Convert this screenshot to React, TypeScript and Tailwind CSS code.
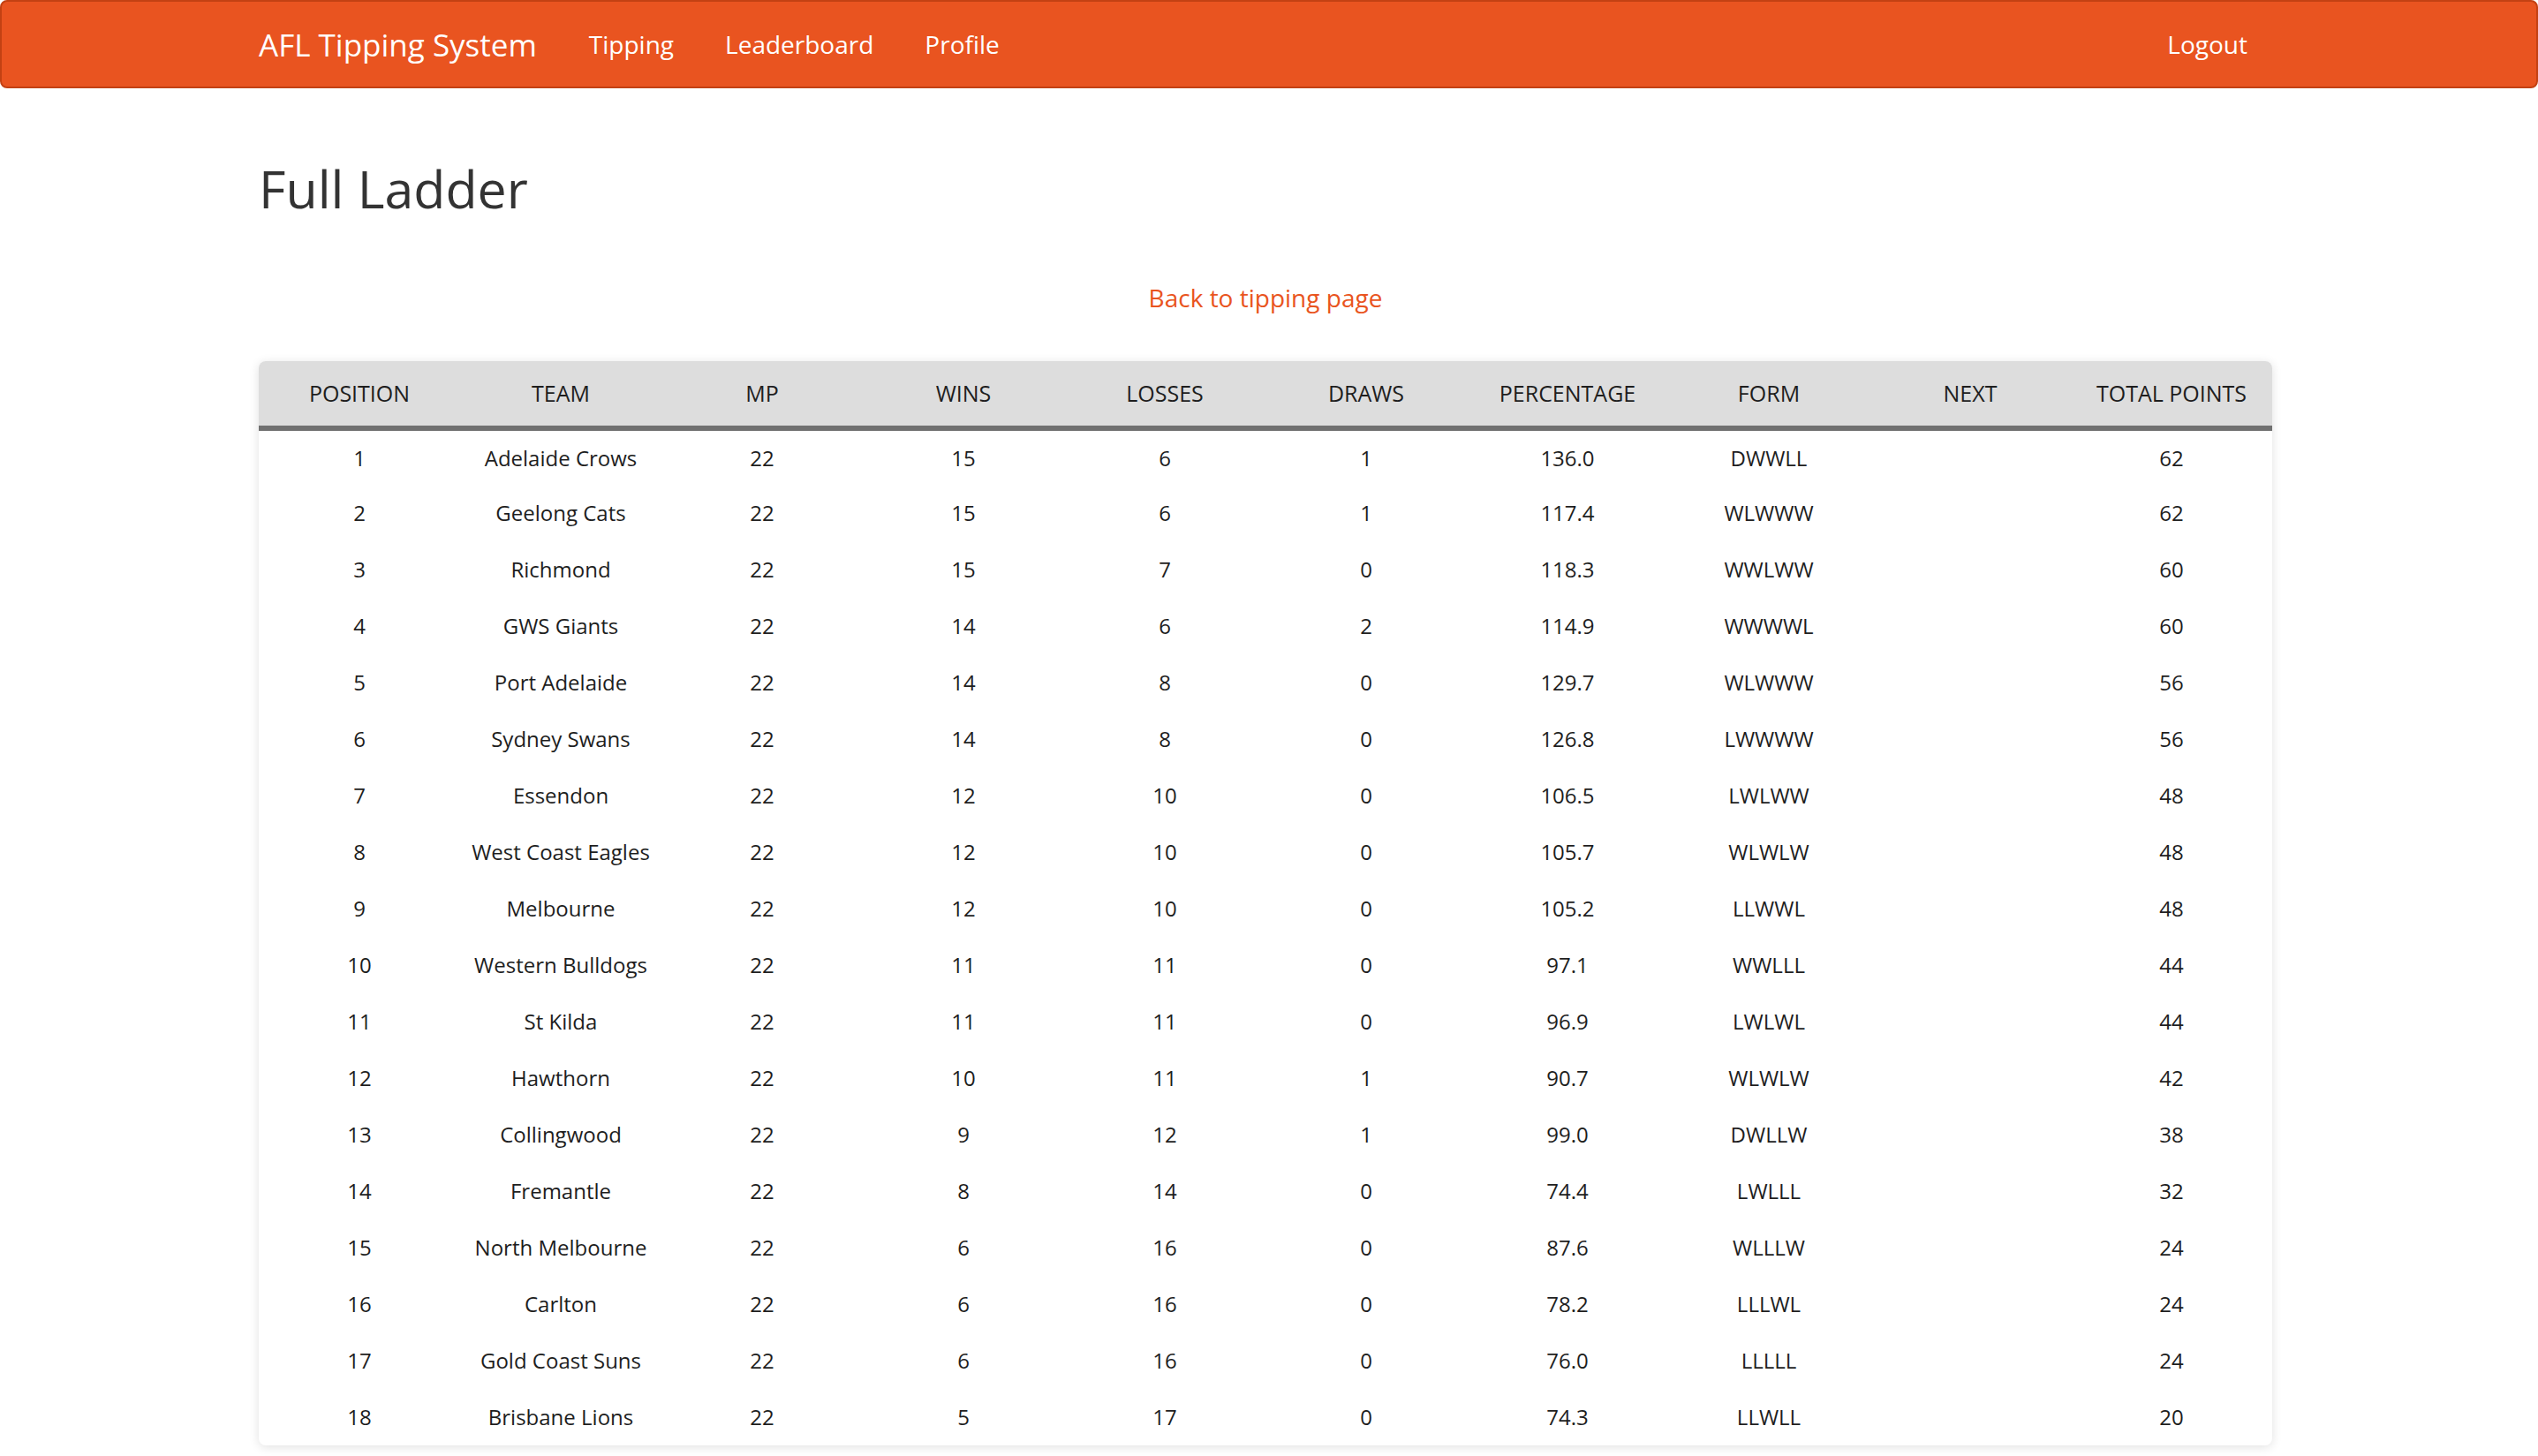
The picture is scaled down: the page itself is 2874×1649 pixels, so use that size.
import React from "react"

const ladder: [number, string, number, number, number, number, string, string, number][] = [
  [1, "Adelaide Crows", 22, 15, 6, 1, "136.0", "DWWLL", 62],
  [2, "Geelong Cats", 22, 15, 6, 1, "117.4", "WLWWW", 62],
  [3, "Richmond", 22, 15, 7, 0, "118.3", "WWLWW", 60],
  [4, "GWS Giants", 22, 14, 6, 2, "114.9", "WWWWL", 60],
  [5, "Port Adelaide", 22, 14, 8, 0, "129.7", "WLWWW", 56],
  [6, "Sydney Swans", 22, 14, 8, 0, "126.8", "LWWWW", 56],
  [7, "Essendon", 22, 12, 10, 0, "106.5", "LWLWW", 48],
  [8, "West Coast Eagles", 22, 12, 10, 0, "105.7", "WLWLW", 48],
  [9, "Melbourne", 22, 12, 10, 0, "105.2", "LLWWL", 48],
  [10, "Western Bulldogs", 22, 11, 11, 0, "97.1", "WWLLL", 44],
  [11, "St Kilda", 22, 11, 11, 0, "96.9", "LWLWL", 44],
  [12, "Hawthorn", 22, 10, 11, 1, "90.7", "WLWLW", 42],
  [13, "Collingwood", 22, 9, 12, 1, "99.0", "DWLLW", 38],
  [14, "Fremantle", 22, 8, 14, 0, "74.4", "LWLLL", 32],
  [15, "North Melbourne", 22, 6, 16, 0, "87.6", "WLLLW", 24],
  [16, "Carlton", 22, 6, 16, 0, "78.2", "LLLWL", 24],
  [17, "Gold Coast Suns", 22, 6, 16, 0, "76.0", "LLLLL", 24],
  [18, "Brisbane Lions", 22, 5, 17, 0, "74.3", "LLWLL", 20],
]

const headers = ["Position", "Team", "MP", "Wins", "Losses", "Draws", "Percentage", "Form", "Next", "Total Points"]

function Navbar() {
  return (
    <nav className="h-[100px] bg-[#e95420] border-2 border-[#c34113] rounded-[8px] text-white pr-[8px]">
      <div className="mx-auto w-[2280px] h-full flex items-center">
        <a href="#" className="text-[35px] leading-none">AFL Tipping System</a>
        <div className="ml-[30px] flex text-[28px]">
          <a href="#" className="px-[29px]">Tipping</a>
          <a href="#" className="px-[29px]">Leaderboard</a>
          <a href="#" className="px-[29px]">Profile</a>
        </div>
        <a href="#" className="ml-auto px-[28px] text-[28px]">Logout</a>
      </div>
    </nav>
  )
}

export default function App() {
  return (
    <div className="min-h-screen bg-white text-[#333]" style={{ fontFamily: '"Open Sans", "Noto Sans", sans-serif' }}>
      <Navbar />
      <div className="pr-[8px]">
        <div className="mx-auto w-[2280px] pb-[8px]">
          <h1 className="mt-[80px] text-[59px] leading-[66px] font-normal">Full Ladder</h1>
          <div className="mt-[71px] text-center text-[28px] leading-[40px]">
            <a href="#" className="text-[#e95420]">Back to tipping page</a>
          </div>
          <div className="mt-[52px] rounded-[8px] overflow-hidden bg-white shadow-[0_2px_12px_rgba(0,0,0,0.12)]">
            <table className="w-full table-fixed text-[#1e1e1e]">
              <thead>
                <tr className="bg-[#dddddd] border-b-[6px] border-[#707070]">
                  {headers.map((h) => (
                    <th key={h} className="h-[76px] text-center font-normal uppercase text-[25px]">{h}</th>
                  ))}
                </tr>
              </thead>
              <tbody>
                {ladder.map((r) => (
                  <tr key={r[0]} className="h-[64px] text-[24px]">
                    <td className="text-center">{r[0]}</td>
                    <td className="text-center">{r[1]}</td>
                    <td className="text-center">{r[2]}</td>
                    <td className="text-center">{r[3]}</td>
                    <td className="text-center">{r[4]}</td>
                    <td className="text-center">{r[5]}</td>
                    <td className="text-center">{r[6]}</td>
                    <td className="text-center">{r[7]}</td>
                    <td className="text-center"></td>
                    <td className="text-center">{r[8]}</td>
                  </tr>
                ))}
              </tbody>
            </table>
          </div>
        </div>
      </div>
    </div>
  )
}
